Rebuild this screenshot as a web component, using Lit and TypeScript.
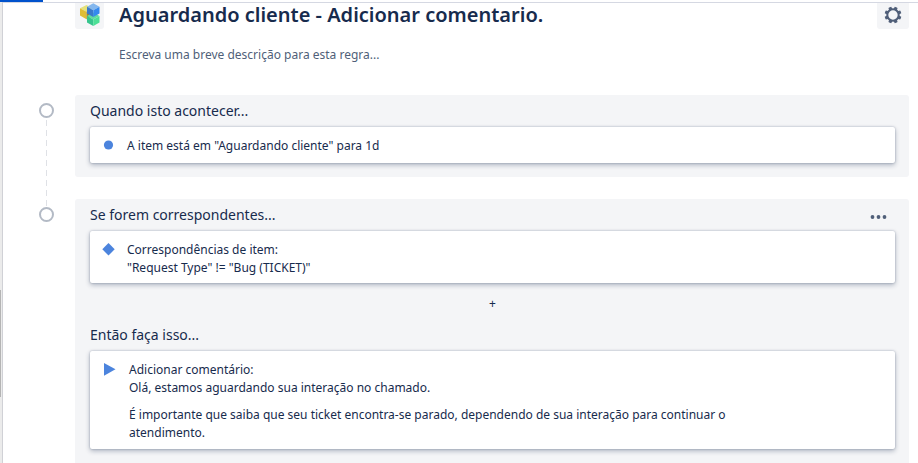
import { LitElement, html, css, svg } from "lit";
import { customElement, property } from "lit/decorators.js";

@customElement("rule-card")
export class RuleCard extends LitElement {
  @property() kind: "trigger" | "condition" | "action" = "trigger";

  static styles = css`
    :host {
      display: block;
    }
    .card {
      box-sizing: border-box;
      display: flex;
      align-items: flex-start;
      gap: 11px;
      min-height: 36px;
      padding: 10px 12px 6px;
      background: #ffffff;
      border-radius: 2px;
      box-shadow: 0 2px 5px rgba(9, 30, 66, 0.3), 0 0 2px rgba(9, 30, 66, 0.3);
      font-size: 12px;
      line-height: 18px;
      color: #172b4d;
    }
    .mark {
      flex: none;
      display: block;
      width: 14px;
      height: 18px;
      fill: #4c84dd;
    }
    .action {
      gap: 13px;
      padding-bottom: 7px;
    }
    .body {
      flex: 1;
      max-width: 624px;
    }
  `;

  private shape() {
    if (this.kind === "trigger") return svg`<circle cx="6.5" cy="8" r="4.600" />`;
    if (this.kind === "condition") return svg`<path d="M6.500 2l6.200 6.300-6.200 6.200L.3 8.300z" />`;
    return svg`<path d="M2 2l11.500 6.300L2 14.700z" />`;
  }

  render() {
    return html`
      <div class="card ${this.kind}">
        <svg class="mark" viewBox="0 0 14 18" aria-hidden="true">${this.shape()}</svg>
        <div class="body"><slot></slot></div>
      </div>
    `;
  }
}

@customElement("app-root")
export class AppRoot extends LitElement {
  static styles = css`
    :host {
      display: block;
      font-family: "Noto Sans", "Open Sans", sans-serif;
      color: #172b4d;
    }
    * {
      box-sizing: border-box;
    }
    .page {
      display: flex;
      flex-direction: column;
      min-height: 100vh;
      background: #ffffff;
    }
    .loading {
      height: 2px;
      background: #ffffff;
    }
    .loaded {
      width: 43px;
      height: 2px;
      background: #0052cc;
    }
    .frame {
      flex: 1;
      display: flex;
    }
    .rail {
      width: 3px;
      background: #ebebeb;
      border-right: 1px solid #d0d1d6;
      padding-top: 288px;
    }
    .thumb {
      width: 1px;
      height: 107px;
      background: #b4b4b4;
    }
    main {
      flex: 1;
      min-width: 0;
      display: flex;
      flex-direction: column;
      padding: 0 9px 0 36px;
      border-top: 1px solid #d5d8e2;
    }
    .header {
      display: flex;
      align-items: flex-start;
      padding-left: 36px;
    }
    .square {
      flex: none;
      display: flex;
      justify-content: center;
      width: 29px;
      height: 26px;
      background: #f4f5f7;
      border-radius: 0 0 3px 3px;
    }
    .settings {
      width: 32px;
      padding: 0;
      border: 0;
      font: inherit;
      cursor: pointer;
    }
    .logo {
      display: block;
      width: 21px;
      height: 24px;
    }
    .gear {
      display: block;
      width: 18px;
      height: 24px;
    }
    .titles {
      flex: 1;
      min-width: 0;
      padding: 0 15px;
    }
    h1 {
      margin: 0;
      font-size: 20px;
      line-height: 24px;
      font-weight: 600;
    }
    .description {
      display: block;
      width: 100%;
      height: 24px;
      margin: 16px 0 28px;
      padding: 0;
      border: 0;
      background: transparent;
      font: 12px/24px "Noto Sans", "Open Sans", sans-serif;
      color: #172b4d;
    }
    .description::placeholder {
      color: #505f79;
      opacity: 1;
    }
    .step {
      display: flex;
      gap: 21px;
    }
    .last {
      flex: 1;
    }
    .track {
      flex: none;
      width: 15px;
      display: flex;
      flex-direction: column;
      align-items: center;
      gap: 2px;
      padding-top: 8px;
    }
    .ring {
      flex: none;
      width: 15px;
      height: 15px;
      border: 2px solid #b3bac5;
      border-radius: 50%;
    }
    .dashes {
      flex: 1;
      width: 1px;
      margin-bottom: -8px;
      background: repeating-linear-gradient(#dfe1e6 0 6px, transparent 6px 10px);
    }
    .column {
      flex: 1;
      min-width: 0;
      padding-bottom: 22px;
    }
    .panel {
      padding: 0 14px 14px 15px;
      background: #f4f5f7;
      border-radius: 3px;
    }
    .last .column {
      display: flex;
      flex-direction: column;
      padding-bottom: 0;
    }
    .last .panel {
      flex: 1;
      border-radius: 3px 3px 0 0;
    }
    .heading {
      display: flex;
      justify-content: space-between;
      align-items: center;
      height: 32px;
    }
    h2 {
      margin: 0;
      font-size: 14px;
      line-height: 20px;
      font-weight: 400;
    }
    .more,
    .add {
      display: block;
      padding: 0;
      border: 0;
      background: transparent;
      cursor: pointer;
    }
    .more {
      width: 32px;
      height: 28px;
    }
    .dots {
      display: block;
      width: 32px;
      height: 28px;
      fill: #505f79;
    }
    .add {
      width: 100%;
      height: 36px;
      padding-top: 5px;
      font: 12px/20px "Noto Sans", "Open Sans", sans-serif;
      color: #172b4d;
    }
    p {
      margin: 0;
    }
    .spaced {
      margin-top: 9px;
    }
  `;

  private logo() {
    return html`
      <svg class="logo" viewBox="0 0 21 24" aria-hidden="true">
        <path fill="#e5e27a" d="M1 5.300L7.500 2l6 3.300-6 3.400z" />
        <path fill="#dfbd33" d="M1 5.300l6.500 3.400v7.500L1 12.500z" />
        <path fill="#a9851f" d="M7.500 8.700l3-1.700v8l-3 1.200z" />
        <path fill="#60dba0" d="M8 13l6.300-3.500 6.200 3.500-6.200 3.500z" />
        <path fill="#36c58d" d="M8 13l6.300 3.500V23L8 19.500z" />
        <path fill="#4be096" d="M14.300 16.500l6.200-3.500v6.500L14.300 23z" />
        <path fill="#84b7ee" d="M8 3.700L14.300 .2l6.200 3.500-6.200 3.500z" />
        <path fill="#3979cb" d="M8 3.700l6.300 3.500V14L8 10.500z" />
        <path fill="#3489ee" d="M14.300 7.200l6.200-3.500v6.800L14.300 14z" />
      </svg>
    `;
  }

  private gear() {
    const teeth = [22.5, 67.5, 112.5, 157.5, 202.5, 247.5, 292.5, 337.5];
    return html`
      <svg class="gear" viewBox="0 0 18 24" aria-hidden="true">
        <circle cx="9" cy="12" r="5.700" fill="none" stroke="#505f79" stroke-width="2" />
        ${teeth.map(
          (a) => svg`<path fill="#505f79" transform="rotate(${a} 9 12)" d="M7.200 6.800l.3-3.100q1.500-.4 3 0l.3 3.100z" />`
        )}
      </svg>
    `;
  }

  render() {
    return html`
      <div class="page">
        <div class="loading"><div class="loaded"></div></div>
        <div class="frame">
          <div class="rail"><div class="thumb"></div></div>
          <main>
            <header class="header">
              <div class="square">${this.logo()}</div>
              <div class="titles">
                <h1>Aguardando cliente - Adicionar comentario.</h1>
                <input
                  class="description"
                  type="text"
                  aria-label="Descrição"
                  placeholder="Escreva uma breve descrição para esta regra..."
                />
              </div>
              <button class="square settings" type="button" aria-label="Configurações">${this.gear()}</button>
            </header>

            <section class="step">
              <div class="track"><div class="ring"></div><div class="dashes"></div></div>
              <div class="column">
                <div class="panel">
                  <div class="heading"><h2>Quando isto acontecer...</h2></div>
                  <rule-card kind="trigger"><p>A item está em "Aguardando cliente" para 1d</p></rule-card>
                </div>
              </div>
            </section>

            <section class="step last">
              <div class="track"><div class="ring"></div></div>
              <div class="column">
                <div class="panel">
                  <div class="heading">
                    <h2>Se forem correspondentes...</h2>
                    <button class="more" type="button" aria-label="Mais ações">
                      <svg class="dots" viewBox="0 0 32 28" aria-hidden="true">
                        <circle cx="9.500" cy="16" r="1.900" />
                        <circle cx="15.500" cy="16" r="1.900" />
                        <circle cx="21.500" cy="16" r="1.900" />
                      </svg>
                    </button>
                  </div>
                  <rule-card kind="condition">
                    <p>Correspondências de item:</p>
                    <p>"Request Type" != "Bug (TICKET)"</p>
                  </rule-card>
                  <button class="add" type="button" aria-label="Adicionar componente">+</button>
                  <div class="heading"><h2>Então faça isso...</h2></div>
                  <rule-card kind="action">
                    <p>Adicionar comentário:</p>
                    <p>Olá, estamos aguardando sua interação no chamado.</p>
                    <p class="spaced">
                      É importante que saiba que seu ticket encontra-se parado, dependendo de sua interação para
                      continuar o atendimento.
                    </p>
                  </rule-card>
                </div>
              </div>
            </section>
          </main>
        </div>
      </div>
    `;
  }
}
